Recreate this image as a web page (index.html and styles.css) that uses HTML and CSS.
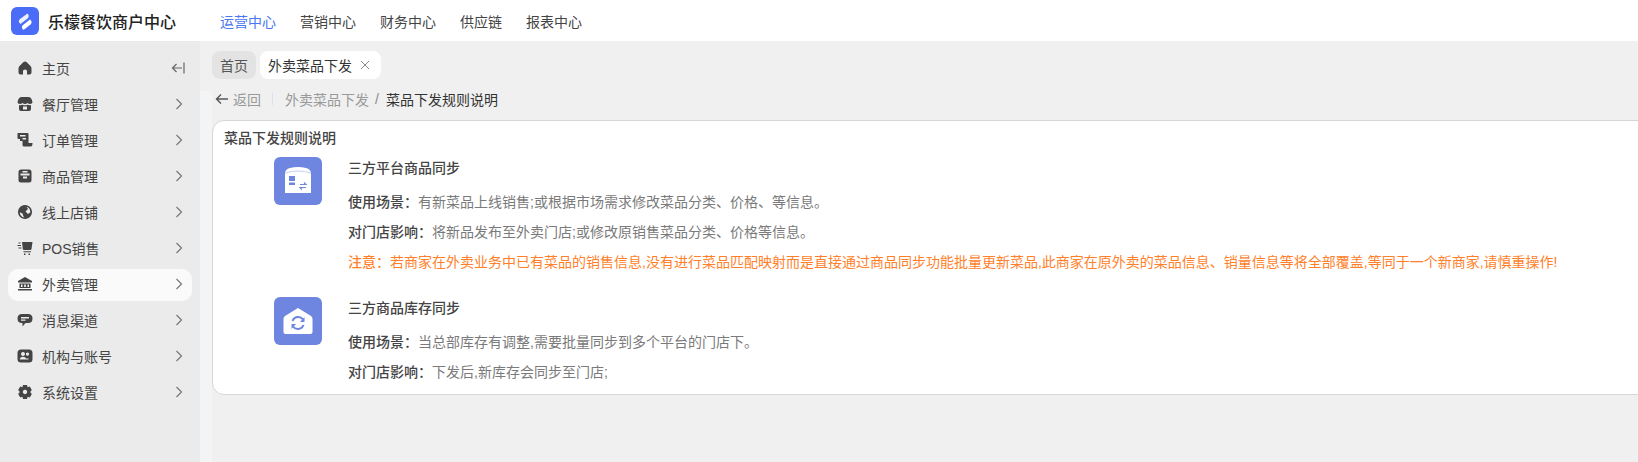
FILE: index.html
```html
<!DOCTYPE html>
<html lang="zh-CN">
<head>
    <meta charset="UTF-8">
    <title>乐檬餐饮商户中心</title>
    <link rel="stylesheet" href="styles.css">
</head>
<body>
    <!-- 顶部导航 -->
    <header class="topbar">
        <div class="brand">
            <svg class="logo" viewBox="0 0 28 28">
                <rect width="28" height="28" rx="6" fill="#4a6cf7"/>
                <path d="M16.5 6.5 L9 12 Q6.5 14.5 9.5 17 L16.5 11.5 Q19 9 16.5 6.5Z" fill="#fff" opacity="0.9"/>
                <path d="M19 12.5 L12 18 Q9.5 20.5 12.5 23 L19.5 17.5 Q22 15 19 12.5Z" fill="#fff"/>
            </svg>
            <span class="brand-name">乐檬餐饮商户中心</span>
        </div>
        <nav class="topnav">
            <a class="topnav-item active">运营中心</a>
            <a class="topnav-item">营销中心</a>
            <a class="topnav-item">财务中心</a>
            <a class="topnav-item">供应链</a>
            <a class="topnav-item">报表中心</a>
        </nav>
    </header>

    <div class="layout">
        <!-- 侧边菜单 -->
        <aside class="sidebar">
            <div class="menu-item">
                <svg class="menu-icon" viewBox="0 0 16 16"><path d="M8 1.5 Q9 1.5 10 2.5 L13.5 6 Q14.5 7 14.5 8.5 V12.5 Q14.5 14.5 12.5 14.5 H10 V11 Q10 9.5 8 9.5 Q6 9.5 6 11 V14.5 H3.5 Q1.5 14.5 1.5 12.5 V8.5 Q1.5 7 2.5 6 L6 2.5 Q7 1.5 8 1.5Z"/></svg>
                <span class="menu-label">主页</span>
                <svg class="collapse" viewBox="0 0 14 14"><path d="M13 1.5 V12.5 M11 7 H1.5 M5.5 3 L1.5 7 L5.5 11"/></svg>
            </div>
            <div class="menu-item">
                <svg class="menu-icon" viewBox="0 0 16 16"><path fill-rule="evenodd" d="M4.5 1 H11.5 Q13.5 1 14.5 3 L15.5 6 Q15.5 8 13 8 Q11.5 8 10.5 7 Q9.5 8 8 8 Q6.5 8 5.5 7 Q4.5 8 3 8 Q0.5 8 0.5 6 L1.5 3 Q2.5 1 4.5 1Z M2 9 Q3.5 9.5 5.5 8.8 Q8 9.8 10.5 8.8 Q12.5 9.5 14 9 V13 Q14 15 12 15 H4 Q2 15 2 13Z M6 10.5 V13.5 H10 V10.5Z"/></svg>
                <span class="menu-label">餐厅管理</span>
                <svg class="arrow" viewBox="0 0 10 14"><path d="M2.5 2 L7.5 7 L2.5 12"/></svg>
            </div>
            <div class="menu-item">
                <svg class="menu-icon" viewBox="0 0 16 16"><path fill-rule="evenodd" d="M0.5 1 H10.5 Q11.5 1 11.5 2 V11 H15.5 V12 Q15.5 14.5 13.5 14.5 H7 Q5.5 14.5 5.5 13 V9 H3 V7 H1.5 Q0.5 7 0.5 6Z M3 3 V4.5 H8.5 V3Z M5.5 6 V7.5 H9 V6Z"/></svg>
                <span class="menu-label">订单管理</span>
                <svg class="arrow" viewBox="0 0 10 14"><path d="M2.5 2 L7.5 7 L2.5 12"/></svg>
            </div>
            <div class="menu-item">
                <svg class="menu-icon" viewBox="0 0 16 16"><path fill-rule="evenodd" d="M4 1.5 H12 Q14.5 1.5 14.5 4 V12 Q14.5 14.5 12 14.5 H4 Q1.5 14.5 1.5 12 V4 Q1.5 1.5 4 1.5Z M3.5 5.5 V7.5 H12.5 V5.5Z M6 8.5 V10.5 H10 V8.5Z M5.5 3 V4.5 H10.5 V3Z"/></svg>
                <span class="menu-label">商品管理</span>
                <svg class="arrow" viewBox="0 0 10 14"><path d="M2.5 2 L7.5 7 L2.5 12"/></svg>
            </div>
            <div class="menu-item">
                <svg class="menu-icon" viewBox="0 0 16 16"><path fill-rule="evenodd" d="M8 1 A7 7 0 1 1 7.99 1Z M9.5 2.8 L11 5 L8.5 7.5 L11 10 L13.2 8.5 A5.4 5.4 0 0 0 9.5 2.8Z M2.8 8.2 L5.5 9.5 L6.5 12.5 L7.5 13.4 A5.4 5.4 0 0 1 2.8 8.2Z"/></svg>
                <span class="menu-label">线上店铺</span>
                <svg class="arrow" viewBox="0 0 10 14"><path d="M2.5 2 L7.5 7 L2.5 12"/></svg>
            </div>
            <div class="menu-item">
                <svg class="menu-icon" viewBox="0 0 16 16"><path d="M5 2 H15.5 L14.5 9 Q14.3 10 13.5 10 H7 Q6 10 5.8 9Z M6.5 11.2 H14 V12.2 H6.5Z M7 13.5 H8.5 V15 H7Z M11.5 13.5 H13 V15 H11.5Z M1.5 2.5 H3.5 V3.5 H1.5Z M0.5 5 H4 V6 H0.5Z M1.5 7.5 H4.5 V8.5 H1.5Z"/></svg>
                <span class="menu-label">POS销售</span>
                <svg class="arrow" viewBox="0 0 10 14"><path d="M2.5 2 L7.5 7 L2.5 12"/></svg>
            </div>
            <div class="menu-item active">
                <svg class="menu-icon" viewBox="0 0 16 16"><path fill-rule="evenodd" d="M8 1 L15 5 V6.5 H1 V5Z M2.5 7.5 H13.5 V12 H2.5Z M4 8.5 V11 H5.5 V8.5Z M7.2 8.5 V11 H8.8 V8.5Z M10.5 8.5 V11 H12 V8.5Z M1 13 H15 V14.5 H1Z"/></svg>
                <span class="menu-label">外卖管理</span>
                <svg class="arrow" viewBox="0 0 10 14"><path d="M2.5 2 L7.5 7 L2.5 12"/></svg>
            </div>
            <div class="menu-item">
                <svg class="menu-icon" viewBox="0 0 16 16"><path fill-rule="evenodd" d="M5 2 H11 Q15.5 2 15.5 6.5 Q15.5 11 11 11 H8.5 L5.5 14.5 V11 H5 Q0.5 11 0.5 6.5 Q0.5 2 5 2Z M4 5 V6.5 H12 V5Z M4 7.5 V8.8 H8.5 V7.5Z"/></svg>
                <span class="menu-label">消息渠道</span>
                <svg class="arrow" viewBox="0 0 10 14"><path d="M2.5 2 L7.5 7 L2.5 12"/></svg>
            </div>
            <div class="menu-item">
                <svg class="menu-icon" viewBox="0 0 16 16"><path fill-rule="evenodd" d="M4 1.5 H12 Q15.5 1.5 15.5 5 V11 Q15.5 14.5 12 14.5 H4 Q0.5 14.5 0.5 11 V5 Q0.5 1.5 4 1.5Z M6 4 A2 2 0 1 0 6.01 4Z M2.8 11.5 H11.5 V10.5 H9 Q8.5 8.8 6 8.8 Q3 8.8 2.8 11.5Z M10.5 4.5 A1.6 1.6 0 1 0 10.51 4.5Z"/></svg>
                <span class="menu-label">机构与账号</span>
                <svg class="arrow" viewBox="0 0 10 14"><path d="M2.5 2 L7.5 7 L2.5 12"/></svg>
            </div>
            <div class="menu-item">
                <svg class="menu-icon" viewBox="0 0 16 16"><path fill-rule="evenodd" d="M6 1 H10 L10.6 3.2 L12.8 2.6 L14.8 6 L13.2 8 L14.8 10 L12.8 13.4 L10.6 12.8 L10 15 H6 L5.4 12.8 L3.2 13.4 L1.2 10 L2.8 8 L1.2 6 L3.2 2.6 L5.4 3.2Z M8 5.8 A2.2 2.2 0 1 0 8.01 5.8Z"/></svg>
                <span class="menu-label">系统设置</span>
                <svg class="arrow" viewBox="0 0 10 14"><path d="M2.5 2 L7.5 7 L2.5 12"/></svg>
            </div>
        </aside>

        <main class="main">
            <div class="tabs">
                <div class="tab">首页</div>
                <div class="tab current">外卖菜品下发<svg class="tab-close" viewBox="0 0 10 10"><path d="M1 1 L9 9 M9 1 L1 9"/></svg></div>
            </div>

            <div class="crumbs">
                <svg class="back-arrow" viewBox="0 0 14 12"><path d="M13 6 H1.5 M6 1.5 L1.5 6 L6 10.5"/></svg>
                <span class="back">返回</span>
                <span class="crumb-line"></span>
                <span class="crumb-link">外卖菜品下发</span>
                <span class="crumb-sep">/</span>
                <span class="crumb-now">菜品下发规则说明</span>
            </div>

            <section class="card">
                <div class="card-title">菜品下发规则说明</div>

                <div class="rule rule-first">
                    <div class="rule-icon">
                        <svg viewBox="0 0 48 48" width="48" height="48">
                            <path d="M16 11 Q24 9 32 11 Q37 12 37 17 V36 H11 V17 Q11 12 16 11Z" fill="#fff"/>
                            <path d="M11 16 Q24 12 37 16" stroke="#c5cff2" stroke-width="1" fill="none"/>
                            <rect x="15" y="19" width="6" height="5" fill="#6e86e0"/>
                            <rect x="15" y="25.5" width="6" height="2.5" fill="#6e86e0"/>
                            <path d="M26 27.5 H32 L30 25.5 M32 30.5 H26 L28 32.5" stroke="#6e86e0" stroke-width="1.2" fill="none"/>
                        </svg>
                    </div>
                    <div class="rule-body">
                        <div class="rule-name">三方平台商品同步</div>
                        <p class="rule-line"><b>使用场景：</b>有新菜品上线销售;或根据市场需求修改菜品分类、价格、等信息。</p>
                        <p class="rule-line"><b>对门店影响：</b>将新品发布至外卖门店;或修改原销售菜品分类、价格等信息。</p>
                        <p class="rule-line warn"><b>注意：</b>若商家在外卖业务中已有菜品的销售信息,没有进行菜品匹配映射而是直接通过商品同步功能批量更新菜品,此商家在原外卖的菜品信息、销量信息等将全部覆盖,等同于一个新商家,请慎重操作!</p>
                    </div>
                </div>

                <div class="rule rule-second">
                    <div class="rule-icon">
                        <svg viewBox="0 0 48 48" width="48" height="48">
                            <path d="M24 11 L37 19 Q38.5 20 38.5 22 V35 Q38.5 37 36.5 37 H11.5 Q9.5 37 9.5 35 V22 Q9.5 20 11 19Z" fill="#fff"/>
                            <path d="M18.5 24 A6 6 0 0 1 29 22.5 M29.5 28 A6 6 0 0 1 19 29.5" stroke="#6e86e0" stroke-width="2" fill="none"/>
                            <path d="M30.5 20 V25 H26Z M17.5 32 V27 H22Z" fill="#6e86e0"/>
                        </svg>
                    </div>
                    <div class="rule-body">
                        <div class="rule-name">三方商品库存同步</div>
                        <p class="rule-line"><b>使用场景：</b>当总部库存有调整,需要批量同步到多个平台的门店下。</p>
                        <p class="rule-line"><b>对门店影响：</b>下发后,新库存会同步至门店;</p>
                    </div>
                </div>
            </section>
        </main>
    </div>
</body>
</html>
```

FILE: styles.css
```css
* {
    box-sizing: border-box;
}

html, body {
    height: 100%;
}

body {
    margin: 0;
    overflow: hidden;
    display: flex;
    flex-direction: column;
    background: #f0f0f0;
    color: #333;
    font-family: "Liberation Sans", "Noto Sans CJK SC", sans-serif;
    font-size: 14px;
}

/* 顶部导航 */
.topbar {
    flex: none;
    height: 41px;
    display: flex;
    align-items: center;
    background: #fff;
}

.brand {
    width: 220px;
    padding-left: 11px;
    display: flex;
    align-items: center;
    gap: 9px;
}

.logo {
    width: 28px;
    height: 28px;
}

.brand-name {
    font-size: 16px;
    font-weight: 500;
    color: #222;
}

.topnav {
    display: flex;
    gap: 24px;
}

.topnav-item {
    color: #444;
}

.topnav-item.active {
    color: #4a78f0;
}

.layout {
    flex: 1;
    display: flex;
    min-height: 0;
}

/* 侧边菜单 */
.sidebar {
    flex: none;
    width: 200px;
    padding: 10px 8px 0;
    background: #ebebeb;
}

.menu-item {
    height: 36px;
    padding: 0 5px 2px 9px;
    display: flex;
    align-items: center;
    border-radius: 10px;
    color: #444;
}

.menu-item.active {
    height: 32px;
    margin: 2px 0;
    background: #fafafa;
}

.menu-icon {
    width: 16px;
    height: 16px;
    fill: #444;
}

.menu-label {
    flex: 1;
    margin-left: 9px;
}

.arrow {
    width: 10px;
    height: 14px;
    margin-right: 3px;
    fill: none;
    stroke: #777;
    stroke-width: 1.2;
}

.collapse {
    width: 14px;
    height: 14px;
    margin-right: 2px;
    fill: none;
    stroke: #666;
    stroke-width: 1.2;
}

/* 内容区 */
.main {
    flex: 1;
    min-width: 0;
    padding: 10px 0 0 12px;
    background: linear-gradient(#f3f4f5, #f3f4f5) left 50px / 12px 100% no-repeat;
}

.tabs {
    display: flex;
    gap: 4px;
}

.tab {
    height: 28px;
    padding: 0 8px;
    display: flex;
    align-items: center;
    border-radius: 8px;
    background: #e3e3e3;
    color: #555;
}

.tab.current {
    padding-right: 11px;
    background: #fff;
    color: #333;
}

.tab-close {
    width: 10px;
    height: 10px;
    margin-left: 8px;
    fill: none;
    stroke: #888;
    stroke-width: 1;
}

.crumbs {
    height: 39px;
    margin-bottom: 2px;
    padding-left: 3px;
    display: flex;
    align-items: center;
    color: #999;
}

.back-arrow {
    width: 14px;
    height: 12px;
    margin-right: 4px;
    fill: none;
    stroke: #555;
    stroke-width: 1.4;
}

.crumb-line {
    width: 1px;
    height: 12px;
    margin: 0 12px 0 11px;
    background: #e0e0e0;
}

.crumb-sep {
    margin: 0 7px 0 6px;
    color: #888;
}

.crumb-now {
    color: #333;
}

/* 卡片 */
.card {
    width: 1460px;
    height: 275px;
    padding: 8px 11px 0;
    border: 1px solid #d6d6d6;
    border-radius: 12px;
    background: #fff;
}

.card-title {
    color: #444;
    font-weight: 500;
    line-height: 18px;
}

.rule {
    display: flex;
    gap: 26px;
    padding-left: 50px;
}

.rule-first {
    margin-top: 10px;
}

.rule-second {
    margin-top: 24px;
}

.rule-icon {
    flex: none;
    width: 48px;
    height: 48px;
    border-radius: 6px;
    background: #6e86e0;
}

.rule-icon svg {
    display: block;
}

.rule-name {
    line-height: 22px;
    font-weight: 500;
    color: #444;
}

.rule-line {
    margin: 9px 0 0;
    line-height: 21px;
    color: #7a7a7a;
    white-space: nowrap;
}

.rule-line b {
    font-weight: 500;
    color: #444;
}

.rule-name + .rule-line {
    margin-top: 13px;
}

.rule-line.warn,
.rule-line.warn b {
    color: #ff7f2a;
}
```
